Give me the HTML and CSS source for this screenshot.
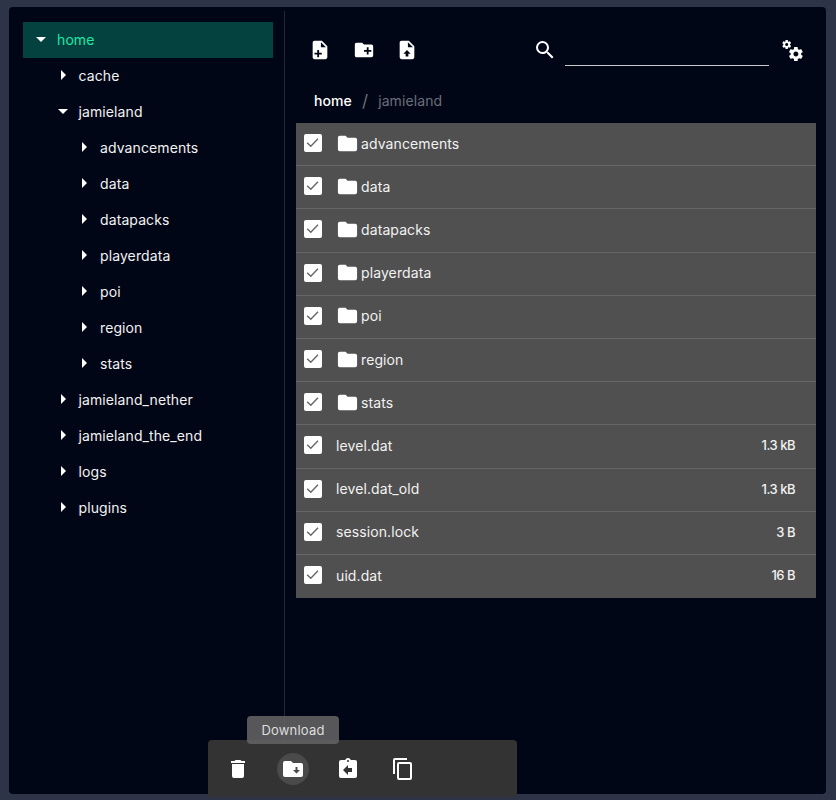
FILE: index.html
```html
<!DOCTYPE html>
<html lang="en">
  <head>
    <meta charset="UTF-8" />
    <meta name="viewport" content="width=device-width, initial-scale=1.0" />
    <title>Files</title>
    <link rel="stylesheet" href="styles.css">
  </head>
  <body>
    <svg class="sprites" width="0" height="0">
      <symbol id="i-down" viewBox="0 0 24 24"><path d="M7,10L12,15L17,10H7Z" /></symbol>
      <symbol id="i-right" viewBox="0 0 24 24"><path d="M10,17L15,12L10,7V17Z" /></symbol>
      <symbol id="i-folder" viewBox="0 0 24 24"><path d="M10,4H4C2.89,4 2,4.89 2,6V18A2,2 0 0,0 4,20H20A2,2 0 0,0 22,18V8C22,6.89 21.1,6 20,6H12L10,4Z" /></symbol>
      <symbol id="i-check" viewBox="0 0 18 18"><path d="M3.2 8.8l3.6 3.4 7.2-7.4" fill="none" stroke="#666" stroke-width="1.4" /></symbol>
    </svg>

    <div class="window">
      <!-- tree -->
      <div class="tree">
        <div class="node active"><svg class="caret"><use href="#i-down" /></svg>home</div>
        <div class="node level-1"><svg class="caret"><use href="#i-right" /></svg>cache</div>
        <div class="node level-1"><svg class="caret"><use href="#i-down" /></svg>jamieland</div>
        <div class="node level-2"><svg class="caret"><use href="#i-right" /></svg>advancements</div>
        <div class="node level-2"><svg class="caret"><use href="#i-right" /></svg>data</div>
        <div class="node level-2"><svg class="caret"><use href="#i-right" /></svg>datapacks</div>
        <div class="node level-2"><svg class="caret"><use href="#i-right" /></svg>playerdata</div>
        <div class="node level-2"><svg class="caret"><use href="#i-right" /></svg>poi</div>
        <div class="node level-2"><svg class="caret"><use href="#i-right" /></svg>region</div>
        <div class="node level-2"><svg class="caret"><use href="#i-right" /></svg>stats</div>
        <div class="node level-1"><svg class="caret"><use href="#i-right" /></svg>jamieland_nether</div>
        <div class="node level-1"><svg class="caret"><use href="#i-right" /></svg>jamieland_the_end</div>
        <div class="node level-1"><svg class="caret"><use href="#i-right" /></svg>logs</div>
        <div class="node level-1"><svg class="caret"><use href="#i-right" /></svg>plugins</div>
      </div>

      <!-- files -->
      <div class="main">
        <div class="toolbar">
          <div class="actions">
            <svg class="action-icon" viewBox="0 0 24 24"><path d="M13,9H18.5L13,3.5V9M6,2H14L20,8V20A2,2 0 0,1 18,22H6C4.89,22 4,21.1 4,20V4C4,2.89 4.89,2 6,2M11,15V12H9V15H6V17H9V20H11V17H14V15H11Z" /></svg>
            <svg class="action-icon" viewBox="0 0 24 24"><path d="M10,4L12,6H20A2,2 0 0,1 22,8V18A2,2 0 0,1 20,20H4C2.89,20 2,19.1 2,18V6C2,4.89 2.89,4 4,4H10M15,9V12H12V14H15V17H17V14H20V12H17V9H15Z" /></svg>
            <svg class="action-icon" viewBox="0 0 24 24"><path d="M13,9V3.5L18.5,9M6,2C4.89,2 4,2.89 4,4V20A2,2 0 0,0 6,22H18A2,2 0 0,0 20,20V8L14,2H6M12,12L16,16H13.5V19H10.5V16H8L12,12Z" /></svg>
          </div>
          <div class="search">
            <svg class="icon" viewBox="0 0 24 24"><path d="M9.5,3A6.5,6.5 0 0,1 16,9.5C16,11.11 15.41,12.59 14.44,13.73L14.71,14H15.5L20.5,19L19,20.5L14,15.5V14.71L13.73,14.44C12.59,15.41 11.11,16 9.5,16A6.5,6.5 0 0,1 3,9.5A6.5,6.5 0 0,1 9.5,3M9.5,5C7,5 5,7 5,9.5C5,12 7,14 9.5,14C12,14 14,12 14,9.5C14,7 12,5 9.5,5Z" /></svg>
            <div class="search-input"></div>
          </div>
          <svg class="icon" viewBox="0 0 24 24"><path d="M15.9,18.45C17.25,18.45 18.35,17.35 18.35,16C18.35,14.65 17.25,13.55 15.9,13.55C14.54,13.55 13.45,14.65 13.45,16C13.45,17.35 14.54,18.45 15.9,18.45M21.1,16.68L22.58,17.84C22.71,17.95 22.75,18.13 22.66,18.29L21.26,20.71C21.17,20.86 21,20.92 20.83,20.86L19.09,20.16C18.73,20.44 18.33,20.67 17.91,20.85L17.64,22.7C17.62,22.87 17.47,23 17.3,23H14.5C14.32,23 14.18,22.87 14.15,22.7L13.89,20.85C13.46,20.67 13.07,20.44 12.71,20.16L10.96,20.86C10.81,20.92 10.62,20.86 10.54,20.71L9.14,18.29C9.05,18.13 9.09,17.95 9.22,17.84L10.7,16.68L10.65,16L10.7,15.31L9.22,14.16C9.09,14.05 9.05,13.86 9.14,13.71L10.54,11.29C10.62,11.13 10.81,11.07 10.96,11.13L12.71,11.84C13.07,11.56 13.46,11.32 13.89,11.15L14.15,9.29C14.18,9.13 14.32,9 14.5,9H17.3C17.47,9 17.62,9.13 17.64,9.29L17.91,11.15C18.33,11.32 18.73,11.56 19.09,11.84L20.83,11.13C21,11.07 21.17,11.13 21.26,11.29L22.66,13.71C22.75,13.86 22.71,14.05 22.58,14.16L21.1,15.31L21.15,16L21.1,16.68M6.69,8.07C7.56,8.07 8.26,7.37 8.26,6.5C8.26,5.63 7.56,4.92 6.69,4.92A1.58,1.58 0 0,0 5.11,6.5C5.11,7.37 5.82,8.07 6.69,8.07M10.03,6.94L11,7.68C11.07,7.75 11.09,7.87 11.03,7.97L10.13,9.53C10.08,9.63 9.96,9.67 9.86,9.63L8.74,9.18L8,9.62L7.81,10.81C7.79,10.92 7.7,11 7.59,11H5.79C5.67,11 5.58,10.92 5.56,10.81L5.4,9.62L4.64,9.18L3.5,9.63C3.41,9.67 3.3,9.63 3.24,9.53L2.34,7.97C2.28,7.87 2.31,7.75 2.39,7.68L3.34,6.94L3.31,6.5L3.34,6.06L2.39,5.32C2.31,5.25 2.28,5.13 2.34,5.03L3.24,3.47C3.3,3.37 3.41,3.33 3.5,3.37L4.63,3.82L5.4,3.38L5.56,2.19C5.58,2.08 5.67,2 5.79,2H7.59C7.7,2 7.79,2.08 7.81,2.19L8,3.38L8.74,3.82L9.86,3.37C9.96,3.33 10.08,3.37 10.13,3.47L11.03,5.03C11.09,5.13 11.07,5.25 11,5.32L10.03,6.06L10.06,6.5L10.03,6.94Z" /></svg>
        </div>

        <div class="breadcrumb">
          <span>home</span>
          <span class="sep">/</span>
          <span class="current">jamieland</span>
        </div>

        <div class="list">
          <div class="row"><div class="check"><svg><use href="#i-check" /></svg></div><svg class="folder"><use href="#i-folder" /></svg><div class="name">advancements</div></div>
          <div class="row"><div class="check"><svg><use href="#i-check" /></svg></div><svg class="folder"><use href="#i-folder" /></svg><div class="name">data</div></div>
          <div class="row"><div class="check"><svg><use href="#i-check" /></svg></div><svg class="folder"><use href="#i-folder" /></svg><div class="name">datapacks</div></div>
          <div class="row"><div class="check"><svg><use href="#i-check" /></svg></div><svg class="folder"><use href="#i-folder" /></svg><div class="name">playerdata</div></div>
          <div class="row"><div class="check"><svg><use href="#i-check" /></svg></div><svg class="folder"><use href="#i-folder" /></svg><div class="name">poi</div></div>
          <div class="row"><div class="check"><svg><use href="#i-check" /></svg></div><svg class="folder"><use href="#i-folder" /></svg><div class="name">region</div></div>
          <div class="row"><div class="check"><svg><use href="#i-check" /></svg></div><svg class="folder"><use href="#i-folder" /></svg><div class="name">stats</div></div>
          <div class="row"><div class="check"><svg><use href="#i-check" /></svg></div><div class="name">level.dat</div><div class="size">1.3 kB</div></div>
          <div class="row"><div class="check"><svg><use href="#i-check" /></svg></div><div class="name">level.dat_old</div><div class="size">1.3 kB</div></div>
          <div class="row"><div class="check"><svg><use href="#i-check" /></svg></div><div class="name">session.lock</div><div class="size">3 B</div></div>
          <div class="row"><div class="check"><svg><use href="#i-check" /></svg></div><div class="name">uid.dat</div><div class="size">16 B</div></div>
        </div>
      </div>
    </div>

    <!-- selection actions -->
    <div class="selection-bar">
      <div class="bar-button"><svg class="icon" viewBox="0 0 24 24"><path d="M19,4H15.5L14.5,3H9.5L8.5,4H5V6H19M6,19A2,2 0 0,0 8,21H16A2,2 0 0,0 18,19V7H6V19Z" /></svg></div>
      <div class="bar-button hover"><svg class="icon" viewBox="0 0 24 24"><path d="M20,6A2,2 0 0,1 22,8V18A2,2 0 0,1 20,20H4A2,2 0 0,1 2,18V6A2,2 0 0,1 4,4H10L12,6H20M14.5,10V13H12L15.5,16.5L19,13H16.5V10H14.5Z" /></svg></div>
      <div class="bar-button"><svg class="icon" viewBox="0 0 24 24"><path d="M16,15H12V18L7,13L12,8V11H16M19,3H14.82C14.4,1.84 13.3,1 12,1C10.7,1 9.6,1.84 9.18,3H5A2,2 0 0,0 3,5V19A2,2 0 0,0 5,21H19A2,2 0 0,0 21,19V5A2,2 0 0,0 19,3M12,3A1,1 0 0,1 13,4A1,1 0 0,1 12,5A1,1 0 0,1 11,4A1,1 0 0,1 12,3Z" /></svg></div>
      <div class="bar-button"><svg class="icon" viewBox="0 0 24 24"><path d="M19,21H8V7H19M19,5H8A2,2 0 0,0 6,7V21A2,2 0 0,0 8,23H19A2,2 0 0,0 21,21V7A2,2 0 0,0 19,5M16,1H4A2,2 0 0,0 2,3V17H4V3H16V1Z" /></svg></div>
    </div>
    <div class="tooltip">Download</div>
  </body>
</html>
```

FILE: styles.css
```css
html,
body {
  height: 100%;
  margin: 0;
  overflow: hidden;
  background-color: #2e3447;
  font-family: "Inter", "Noto Sans", sans-serif;
  font-size: 14px;
  letter-spacing: 0.1px;
  color: #f2f2f2;
}

.sprites {
  position: absolute;
}
svg {
  fill: currentColor;
  display: block;
}
.icon {
  width: 24px;
  height: 24px;
  color: #fff;
}
.action-icon {
  width: 22px;
  height: 22px;
  color: #fff;
}

.window {
  display: flex;
  height: 787px;
  margin: 7px 10px 0 9px;
  border-radius: 4px;
  background-color: #010617;
}

/* tree */
.tree {
  width: 250px;
  padding: 11px 11px 0 14px;
  border-right: 1px solid #232838;
  margin-bottom: 54px;
  margin-top: 4px;
  flex-shrink: 0;
}
.node {
  display: flex;
  align-items: center;
  height: 36px;
  box-sizing: border-box;
  padding: 0 0 2px 6px;
}
.node.level-1 {
  padding-left: 27.5px;
}
.node.level-2 {
  padding-left: 49px;
}
.node.active {
  background-color: #03423f;
  color: #1de9a8;
}
.caret {
  width: 24px;
  height: 24px;
  margin-right: 4px;
  color: #fff;
}

/* files */
.main {
  flex: auto;
  padding: 7px 10px 0 11px;
}
.toolbar {
  display: flex;
  align-items: center;
  height: 72px;
  padding: 0 12px 0 13px;
}
.actions {
  display: flex;
  gap: 21.5px;
  margin-right: 115px;
}
.search {
  display: flex;
  align-items: center;
  gap: 8px;
  flex: auto;
  margin-right: 11px;
}
.search-input {
  flex: auto;
  height: 28px;
  border-bottom: 1px solid #c8c8c8;
  margin-top: 3px;
}

.breadcrumb {
  display: flex;
  align-items: center;
  gap: 10px;
  height: 29px;
  margin-bottom: 8px;
  padding-left: 18px;
  color: #fff;
  font-weight: 500;
}
.breadcrumb .sep,
.breadcrumb .current {
  color: #6b6f7a;
  font-weight: 400;
}
.breadcrumb .sep {
  font-size: 17px;
}

.list {
  background-color: #505050;
}
.row {
  display: flex;
  align-items: center;
  height: 43.2px;
  box-sizing: border-box;
  padding: 0 21px 2px 8px;
  border-bottom: 1px solid #666;
}
.row:last-child {
  border-bottom: none;
}
.check {
  width: 18px;
  height: 18px;
  border-radius: 2px;
  background-color: #fff;
  margin-right: 14px;
  flex-shrink: 0;
}
.check svg {
  width: 18px;
  height: 18px;
}
.folder {
  width: 23px;
  height: 23px;
  color: #fff;
  margin-right: 2px;
  flex-shrink: 0;
}
.name {
  flex: auto;
}
.size {
  font-size: 13px;
  font-weight: 500;
  letter-spacing: -0.5px;
}

/* selection actions */
.selection-bar {
  position: absolute;
  left: 208px;
  top: 740px;
  width: 309px;
  height: 57px;
  box-sizing: border-box;
  padding-left: 14px;
  display: flex;
  align-items: center;
  gap: 23px;
  background-color: #333;
  border-radius: 4px;
}
.bar-button {
  width: 32px;
  height: 32px;
  border-radius: 50%;
  display: flex;
  align-items: center;
  justify-content: center;
}
.bar-button.hover {
  background-color: #4a4a4a;
}
.tooltip {
  position: absolute;
  left: 247px;
  top: 716px;
  width: 92px;
  height: 28px;
  line-height: 28px;
  text-align: center;
  border-radius: 4px;
  background-color: rgba(97, 97, 97, 0.9);
  color: #ddd;
  font-size: 13px;
  letter-spacing: 0.2px;
}
```
